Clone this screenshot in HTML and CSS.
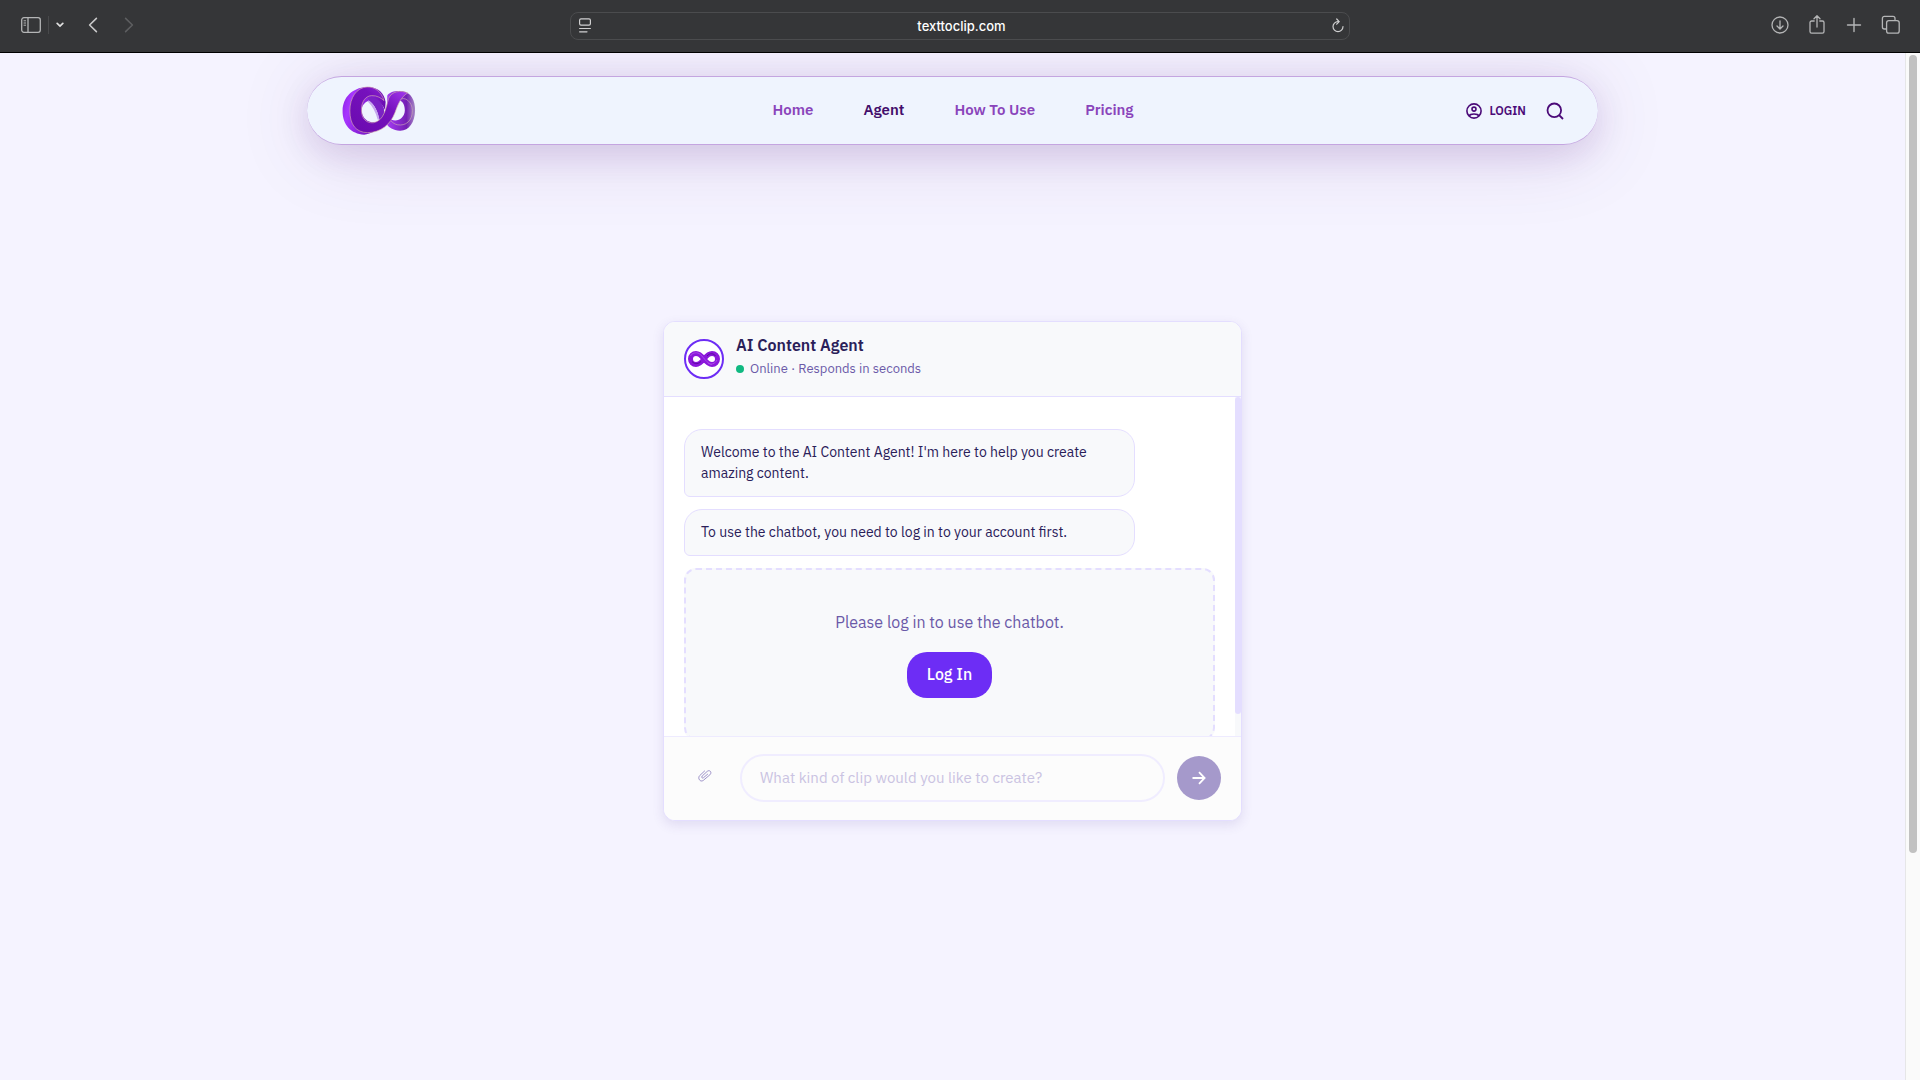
FILE: index.html
```html
<!DOCTYPE html>
<html lang="en">
<head>
  <meta charset="UTF-8" />
  <meta name="viewport" content="width=device-width, initial-scale=1.0" />
  <title>AI Content Agent</title>
  <link rel="stylesheet" href="styles.css">
</head>
<body>

  <!-- Browser toolbar -->
  <div class="toolbar">
    <div class="toolbar-left">
      <button class="tool" aria-label="Sidebar">
        <svg width="20" height="16" viewBox="0 0 20 16" fill="none" stroke="currentColor" stroke-width="1.3">
          <rect x="0.7" y="0.7" width="18.6" height="14.6" rx="2.2" />
          <path d="M7 1v14" />
          <path d="M2.6 3.8h2.4M2.6 6h2.4M2.6 8.2h2.4" stroke-width="1" />
        </svg>
      </button>
      <span class="tool-divider"></span>
      <button class="tool tool-caret" aria-label="Tab groups">
        <svg width="8" height="6" viewBox="0 0 8 6" fill="none" stroke="currentColor" stroke-width="1.7" stroke-linecap="round"><path d="M1.2 1.4L4 4l2.8-2.6" /></svg>
      </button>
      <button class="tool tool-back" aria-label="Back">
        <svg width="10" height="16" viewBox="0 0 10 16" fill="none" stroke="currentColor" stroke-width="1.6" stroke-linecap="round" stroke-linejoin="round"><path d="M8.4 1.4L1.6 8l6.8 6.6" /></svg>
      </button>
      <button class="tool tool-forward" aria-label="Forward" disabled>
        <svg width="10" height="16" viewBox="0 0 10 16" fill="none" stroke="currentColor" stroke-width="1.6" stroke-linecap="round" stroke-linejoin="round"><path d="M1.6 1.4L8.4 8l-6.8 6.6" /></svg>
      </button>
    </div>

    <div class="address">
      <svg width="12" height="15" viewBox="0 0 12 15" fill="none" stroke="currentColor" stroke-width="1.2" stroke-linecap="round">
        <rect x="0.6" y="0.8" width="10.8" height="6.4" rx="1.4" />
        <path d="M0.6 10.5h10.8M0.6 13.8h7.4" />
      </svg>
      <span class="address-url">texttoclip.com</span>
      <button class="tool" aria-label="Reload">
        <svg width="12" height="15" viewBox="0 0 12 15" fill="none" stroke="currentColor" stroke-width="1.2" stroke-linecap="round" stroke-linejoin="round">
          <path d="M6.6 3.6H6a5 5 0 1 0 5 5" />
          <path d="M4.7 1l2.5 2.6-2.5 2.6" />
        </svg>
      </button>
    </div>

    <div class="toolbar-right">
      <button class="tool" aria-label="Downloads">
        <svg width="20" height="20" viewBox="0 0 20 20" fill="none" stroke="currentColor" stroke-width="1.3" stroke-linecap="round" stroke-linejoin="round">
          <circle cx="10" cy="10" r="8" /><path d="M10 5.8v8M7 11l3 3 3-3" />
        </svg>
      </button>
      <button class="tool" aria-label="Share">
        <svg width="20" height="20" viewBox="0 0 20 20" fill="none" stroke="currentColor" stroke-width="1.3" stroke-linecap="round" stroke-linejoin="round">
          <path d="M7.2 6H4.6A1.6 1.6 0 0 0 3 7.6v9a1.6 1.6 0 0 0 1.6 1.6h10.800a1.6 1.6 0 0 0 1.6-1.6v-9A1.6 1.6 0 0 0 15.4 6h-2.6" />
          <path d="M10 12V0.9M7 3.7l3-2.9 3 2.9" />
        </svg>
      </button>
      <button class="tool" aria-label="New tab">
        <svg width="20" height="20" viewBox="0 0 20 20" fill="none" stroke="currentColor" stroke-width="1.4" stroke-linecap="round"><path d="M10 3.5v13M3.5 10h13" /></svg>
      </button>
      <button class="tool" aria-label="Tab overview">
        <svg width="20" height="20" viewBox="0 0 20 20" fill="none" stroke="currentColor" stroke-width="1.3" stroke-linejoin="round">
          <rect x="5.6" y="5.6" width="12.6" height="12.6" rx="2.2" />
          <path d="M5.600 14H3.400A2 2 0 0 1 1.400 12V3.400a2 2 0 0 1 2-2H12a2 2 0 0 1 2 2v2.200" />
        </svg>
      </button>
    </div>
  </div>

  <div class="viewport">
    <div class="page">

      <header class="navbar">
        <a class="brand" href="#" aria-label="Text to Clip">
          <svg width="74" height="49" viewBox="160 77 222 148">
            <defs>
              <linearGradient id="side" x1="0" x2="1" y1="0" y2="0.3">
                <stop offset="0" stop-color="#8a1fe0" />
                <stop offset="0.25" stop-color="#a735ff" />
                <stop offset="1" stop-color="#6a0cb0" />
              </linearGradient>
              <linearGradient id="band" x1="0" x2="1" y1="1" y2="0">
                <stop offset="0" stop-color="#6a0aae" />
                <stop offset="0.6" stop-color="#7611bd" />
                <stop offset="1" stop-color="#a93df5" />
              </linearGradient>
              <linearGradient id="loop" x1="0" x2="1" y1="0" y2="0">
                <stop offset="0" stop-color="#a63bf5" />
                <stop offset="0.7" stop-color="#7420b4" />
                <stop offset="1" stop-color="#a78bc4" />
              </linearGradient>
            </defs>
            <path fill="url(#loop)" fill-rule="evenodd" d="M296 106C304 94 322 91 342 93C367 96 381 120 380 152C379 188 361 213 334 212C314 211 300 202 294 192ZM333 121C319 135 317 158 309 179C327 187 348 174 349 151C349 137 344 124 333 121Z" />
            <path fill="none" stroke="#c9a7b4" stroke-width="2" d="M334 118C348 108 371 123 372 151C372 182 352 199 326 194C318 192 312 188 307 182" />
            <path fill="url(#side)" fill-rule="evenodd" d="M232 80C266 77 287 97 291 125L287 180C270 208 246 224 226 224C187 222 160 194 161 151C162 110 191 83 232 80ZM242 121C227 126 218 137 219 153C221 176 240 190 263 186C277 183 288 171 290 152C284 133 265 116 242 121Z" />
            <path fill="#7a22c4" d="M238 110C256 107 276 118 286 145L286 168L278 181L272 180C268 157 259 133 240 121Z" />
            <path fill="#c5a5ee" d="M240 120C256 132 268 154 273 180L267 178C261 156 252 138 237 124Z" />
            <path fill="url(#band)" stroke="#d1a8ad" stroke-width="2" d="M286 121C278 94 258 79 235 80C203 82 183 112 183 152C183 194 202 217 236 218C278 217 305 193 319 158C329 131 336 111 358 98C337 89 309 92 300 115C291 145 287 182 254 188C231 190 218 174 218 149C218 124 230 107 249 106C266 105 279 115 286 121Z" />
          </svg>
        </a>
        <nav class="nav-links">
          <a href="#">Home</a>
          <a href="#" class="active">Agent</a>
          <a href="#">How To Use</a>
          <a href="#">Pricing</a>
        </nav>
        <div class="nav-actions">
          <a class="login-link" href="#">
            <svg width="16" height="16" viewBox="0 0 16 16" fill="none" stroke="currentColor" stroke-width="1.6">
              <circle cx="8" cy="8" r="7.1" /><circle cx="8" cy="6.1" r="2" /><path d="M3 13C4.5 10.3 11.5 10.3 13 13" />
            </svg>
            LOGIN
          </a>
          <button class="search-btn" aria-label="Search">
            <svg width="18" height="18" viewBox="0 0 18 18" fill="none" stroke="currentColor" stroke-width="1.8"><circle cx="8.3" cy="8.3" r="6.8" /><path d="M13 13l4 4" /></svg>
          </button>
        </div>
      </header>

      <main class="chat">
        <div class="chat-header">
          <div class="avatar">
            <svg width="34" height="18" viewBox="0 0 34 18" fill="none">
              <path stroke="#8b17db" stroke-width="5" d="M17 9C13 4 11.5 3.5 9 3.5a5.5 5.5 0 0 0 0 11C11.5 14.5 13 14 17 9S22.5 3.5 25 3.5a5.5 5.5 0 0 1 0 11C22.5 14.5 21 14 17 9Z" />
              <path stroke="#a94be8" stroke-width="1" d="M3.5 6C5 3 9 2 12 3.5S21 15 25 14.5M21 13C24 15 28 14 30 10" />
              <path stroke="#5b0c9c" stroke-width="1" d="M5 11.5C8 15 12 13.5 14 11.5M20 6C23 2.5 27 3.5 28.5 6" />
            </svg>
          </div>
          <div>
            <h1 class="chat-title">AI Content Agent</h1>
            <p class="chat-status"><span class="status-dot"></span>Online · Responds in seconds</p>
          </div>
        </div>

        <div class="chat-body">
          <div class="messages">
            <p class="message">Welcome to the AI Content Agent! I'm here to help you create amazing content.</p>
            <p class="message">To use the chatbot, you need to log in to your account first.</p>
            <div class="login-prompt">
              <p>Please log in to use the chatbot.</p>
              <button class="login-btn">Log In</button>
            </div>
          </div>
          <div class="chat-scroll"><div class="chat-scroll-thumb"></div></div>
        </div>

        <form class="chat-input">
          <button type="button" class="attach-btn" aria-label="Attach a file" disabled>
            <svg width="14" height="12" viewBox="0 0 14 12" fill="none" stroke="currentColor" stroke-width="1" stroke-linecap="round">
              <path d="M6.600 1L1.700 5.600C-0.800 8.300 2.300 12.600 5.300 10.400L11.900 4.800C14.400 2.300 11.700 -0.600 9.300 1.300L4.200 6C3 7.500 4.300 8.600 5.500 7.700L9.600 4.200" />
            </svg>
          </button>
          <input type="text" class="prompt" aria-label="Message" placeholder="What kind of clip would you like to create?" disabled>
          <button type="submit" class="send-btn" aria-label="Send" disabled>
            <svg width="14" height="14" viewBox="0 0 14 14" fill="none" stroke="currentColor" stroke-width="1.8"><path d="M0.5 7h12M7 1.2L12.6 7L7 12.8" /></svg>
          </button>
        </form>
      </main>

    </div>
    <div class="page-scroll"><div class="page-scroll-thumb"></div></div>
  </div>

</body>
</html>
```
FILE: styles.css
```css
* {
  box-sizing: border-box;
}

body {
  margin: 0;
  height: 100vh;
  display: flex;
  flex-direction: column;
  overflow: hidden;
  font-family: "IBM Plex Sans", Roboto, sans-serif;
  color: #2a2059;
}

p, h1 {
  margin: 0;
}

a {
  color: inherit;
  text-decoration: none;
}

button {
  font-family: inherit;
  border: none;
  background: none;
  padding: 0;
  cursor: pointer;
}

svg {
  display: block;
}

/* browser toolbar */
.toolbar {
  display: grid;
  grid-template-columns: 1fr minmax(300px, 780px) 1fr;
  align-items: center;
  height: 53px;
  flex-shrink: 0;
  padding: 0 19px 1px;
  background-color: #353638;
  border-bottom: 1px solid #000;
  color: #b4b5b6;
}

.tool {
  color: inherit;
}

.toolbar-left,
.toolbar-right {
  display: flex;
  align-items: center;
  padding-bottom: 1px;
}

.toolbar-left {
  padding-left: 2px;
}

.toolbar-right {
  justify-content: flex-end;
  gap: 17px;
}

.tool-divider {
  width: 1px;
  height: 18px;
  margin: 0 7px;
  background-color: #48494b;
}

.tool-caret {
  color: #e0e0e0;
}

.tool-back {
  margin-left: 24px;
  color: #c8c8c9;
}

.tool-forward {
  margin-left: 26px;
  color: #5d5e60;
}

.address {
  display: flex;
  align-items: center;
  justify-content: space-between;
  height: 28px;
  padding: 0 5px 0 8px;
  border: 1px solid #4b4c4e;
  border-radius: 8px;
  color: #d0d0d1;
}

.address-url {
  font-family: Inter, sans-serif;
  font-size: 13px;
  font-weight: 500;
  color: #fff;
}

/* page area */
.viewport {
  flex: 1;
  min-height: 0;
  display: flex;
}

.page {
  flex: 1;
  padding: 23px 24px 0;
  background-color: #f5f3ff;
  overflow: hidden;
}

.page-scroll {
  width: 15px;
  padding: 2px 3px;
  background-color: #fafafa;
  border-left: 1px solid #e6e6e8;
}

.page-scroll-thumb {
  width: 8px;
  height: 78%;
  border-radius: 4px;
  background-color: #c1c1c1;
}

/* no side borders, so the outline thins out round the ends */
.navbar {
  display: grid;
  grid-template-columns: 1fr auto 1fr;
  align-items: center;
  max-width: 1291px;
  height: 69px;
  margin: 0 auto;
  padding: 0 34px 0 35px;
  background-color: #eff4fe;
  border: solid #c4a5e0;
  border-width: 1px 0;
  border-radius: 35px;
  box-shadow: 0 10px 32px rgba(76, 16, 120, 0.12), 0 8px 80px rgba(76, 16, 120, 0.14);
}

.brand {
  justify-self: start;
}

.nav-links {
  display: flex;
  gap: 50px;
  padding-bottom: 2px;
  font-size: 15px;
  font-weight: 600;
  color: #8a44bb;
}

.nav-links .active {
  color: #430d6b;
}

.nav-actions {
  display: flex;
  align-items: center;
  justify-content: flex-end;
  gap: 20px;
  color: #4b0a78;
}

.login-link {
  display: flex;
  align-items: center;
  gap: 7px;
  font-size: 12px;
  font-weight: 600;
}

.search-btn {
  color: inherit;
}

/* chat card */
.chat {
  max-width: 579px;
  margin: 176px auto 0;
  background-color: #fff;
  border: 1px solid #e4deff;
  border-radius: 12px;
  box-shadow: 0 4px 12px rgba(70, 50, 150, 0.12);
  overflow: hidden;
}

.chat-header {
  display: flex;
  align-items: center;
  gap: 12px;
  height: 75px;
  padding: 0 20px;
  background-color: #f8f9fb;
  border-bottom: 1px solid #e4deff;
}

.avatar {
  display: flex;
  align-items: center;
  justify-content: center;
  width: 40px;
  height: 40px;
  background-color: #fff;
  border: 2px solid #6d2df5;
  border-radius: 50%;
}

.chat-title {
  font-size: 16px;
  font-weight: 600;
  line-height: 16px;
}

.chat-status {
  display: flex;
  align-items: center;
  gap: 6px;
  margin: 6px 0 2px;
  font-size: 13px;
  line-height: 20px;
  color: #6b5aa8;
}

.status-dot {
  width: 8px;
  height: 8px;
  border-radius: 50%;
  background-color: #10b981;
}

.chat-body {
  display: flex;
  height: 339px;
}

.messages {
  flex: 1;
  display: flex;
  flex-direction: column;
  gap: 12px;
  padding: 32px 20px 20px;
  overflow: hidden;
}

.message {
  flex-shrink: 0;
  width: 85%;
  padding: 12px 16px;
  background-color: #f8f9fb;
  border: 1px solid #e4deff;
  border-radius: 18px 18px 18px 6px;
  font-size: 14px;
  line-height: 21px;
}

.login-prompt {
  flex-shrink: 0;
  padding: 40px;
  background-color: #f8f9fb;
  border: 2px dashed #e4deff;
  border-radius: 12px;
  text-align: center;
  font-size: 16px;
  line-height: 24px;
  color: #6b5aa8;
}

.login-btn {
  height: 46px;
  margin-top: 18px;
  padding: 0 20px 2px;
  border-radius: 20px;
  background-color: #6d2df5;
  color: #fff;
  font-size: 16px;
  font-weight: 500;
}

.chat-scroll {
  width: 6px;
  background-color: #f8f9fb;
}

.chat-scroll-thumb {
  height: 317px;
  border-radius: 3px;
  background-color: #e4deff;
}

.chat-input {
  display: flex;
  align-items: center;
  gap: 12px;
  height: 84px;
  padding: 0 20px 2px;
  background-color: #fcfcfc;
  border-top: 1px solid #eeebff;
}

.attach-btn {
  display: flex;
  align-items: center;
  justify-content: center;
  width: 44px;
  height: 44px;
  padding: 0 2px 4px 0;
  color: #9d92c8;
}

.prompt {
  flex: 1;
  min-width: 0;
  height: 48px;
  padding: 0 18px;
  background-color: #fcfcfc;
  border: 2px solid #f0edff;
  border-radius: 24px;
  font-family: inherit;
  font-size: 15px;
}

.prompt::placeholder {
  color: #cac3e2;
}

.send-btn {
  display: flex;
  align-items: center;
  justify-content: center;
  width: 44px;
  height: 44px;
  border-radius: 50%;
  background-color: #a599cb;
  color: #fff;
}
```
